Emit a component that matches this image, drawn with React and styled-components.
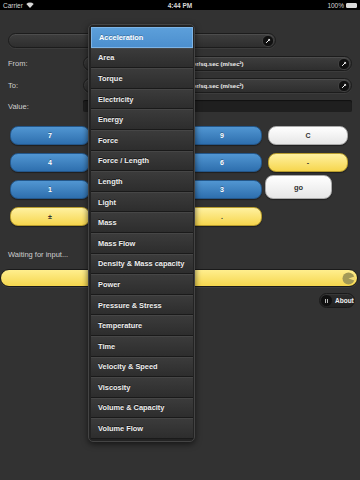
import React from 'react';
import styled, { createGlobalStyle, css } from 'styled-components';

const Global = createGlobalStyle`
  html, body {
    margin: 0;
    padding: 0;
    background: #333;
  }
  * { box-sizing: border-box; }
`;

const Screen = styled.div`
  position: relative;
  width: 360px;
  height: 480px;
  overflow: hidden;
  background: #323232;
  font-family: 'Liberation Sans', Arial, sans-serif;
  color: #ddd;
`;

const StatusBar = styled.div`
  height: 10px;
  background: #000;
  display: grid;
  grid-template-columns: 1fr auto 1fr;
  align-items: center;
  padding: 0 3px;
  font-size: 6.5px;
  color: #d8d8d8;

  & > span:last-child {
    justify-self: end;
    display: flex;
    align-items: center;
    gap: 2px;
  }
  & > span:first-child {
    display: flex;
    align-items: center;
    gap: 3px;
  }
`;

const Clock = styled.span`
  font-weight: bold;
`;

const Battery = styled.span`
  width: 11px;
  height: 5px;
  border: 1px solid #d8d8d8;
  background: #d8d8d8;
  border-radius: 1px;
`;

const Main = styled.div`
  padding: 0 8px;
`;

const Select = styled.div`
  height: 15px;
  border-radius: 8px;
  background: linear-gradient(#3e3e3e, #2e2e2e);
  border: 1px solid #1c1c1c;
  box-shadow: inset 0 1px 0 rgba(255, 255, 255, 0.08), 0 1px 0 rgba(255, 255, 255, 0.05);
  display: flex;
  align-items: center;
  padding: 0 1px 0 10px;
  font-size: 6px;
  font-weight: bold;
  color: #eee;
  width: ${(p) => p.$width || 'auto'};
  flex: ${(p) => (p.$width ? 'none' : '1')};

  & > span {
    flex: 1;
    text-align: center;
    margin-right: 6px;
    white-space: nowrap;
  }
  & > svg {
    flex: none;
  }
`;

const TopSelect = styled(Select)`
  margin-top: 23px;
`;

const FieldRow = styled.div`
  display: flex;
  align-items: center;
  margin-top: ${(p) => p.$top}px;
`;

const Label = styled.div`
  width: 75px;
  font-size: 7.5px;
  color: #d0d0d0;
`;

const ValueBox = styled.div`
  flex: 1;
  height: 12px;
  border-radius: 2px;
  background: #1f1f1f;
  box-shadow: inset 0 1px 1px rgba(0, 0, 0, 0.5);
`;

const Knob = () => (
  <svg width="12" height="12" viewBox="0 0 12 12">
    <circle cx="6" cy="6" r="5.6" fill="#111" stroke="#555" strokeWidth="0.6" />
    <path d="M4.4 7.6 L7.4 4.6" stroke="#fff" strokeWidth="1" strokeLinecap="round" />
    <path d="M6 4.4 L7.6 4.4 L7.6 6" fill="none" stroke="#fff" strokeWidth="0.7" />
  </svg>
);

const Keypad = styled.div`
  display: grid;
  grid-template-columns: repeat(4, 80px);
  grid-auto-rows: 19px;
  column-gap: 6px;
  row-gap: 8px;
  margin: 14px 0 0 2px;
`;

const tones = {
  blue: css`
    background: linear-gradient(#5196d2, #2e6fae);
    border-color: #24578a;
    color: #fff;
    text-shadow: 0 -1px 0 rgba(0, 0, 0, 0.3);
  `,
  yellow: css`
    background: linear-gradient(#fff1a0, #f6d64e);
    border-color: #b89d2e;
    color: #333;
  `,
  white: css`
    background: linear-gradient(#ffffff, #e6e6e6);
    border-color: #aaa;
    color: #333;
  `,
};

const Key = styled.div`
  border-radius: 8px;
  border: 1px solid;
  display: flex;
  align-items: center;
  justify-content: center;
  font-size: 7px;
  font-weight: bold;
  box-shadow: 0 1px 1px rgba(0, 0, 0, 0.4);
  ${(p) => tones[p.$tone]}
`;

const GoKey = styled(Key)`
  width: 67px;
  margin: -5px 0 0 -3px;
  font-size: 7.5px;
`;

const Waiting = styled.div`
  margin-top: 24px;
  font-size: 7.5px;
  color: #cfcfcf;
`;

const ProgressBar = styled.div`
  margin: 10px 2px 0 0;
  height: 18px;
  border-radius: 9px;
  background: linear-gradient(#ffee8e, #f5d64e);
  border: 1px solid #1a1a1a;
  box-shadow: 0 1px 0 rgba(255, 255, 255, 0.06);
  display: flex;
  align-items: center;
  justify-content: flex-end;
  padding-right: 2px;
`;

const AboutRow = styled.div`
  display: flex;
  justify-content: flex-end;
  padding-right: 5px;
  margin-top: 6px;
`;

const AboutButton = styled.div`
  height: 15px;
  width: 36px;
  border-radius: 8px;
  background: linear-gradient(#2c2c2c, #222);
  border: 1px solid #1a1a1a;
  box-shadow: inset 0 1px 0 rgba(255, 255, 255, 0.06);
  display: flex;
  align-items: center;
  gap: 3px;
  padding-left: 1px;
  font-size: 6.5px;
  font-weight: bold;
  color: #f0f0f0;
`;

const AboutIcon = styled.span`
  width: 11px;
  height: 11px;
  border-radius: 50%;
  background: #111;
  display: flex;
  align-items: center;
  justify-content: center;
  gap: 1px;

  &::before, &::after {
    content: '';
    width: 1px;
    height: 4px;
    background: #bbb;
  }
`;

const Menu = styled.div`
  position: absolute;
  left: 88px;
  top: 24px;
  width: 107px;
  padding: 2px 1px 2px 2px;
  background: #232323;
  border: 1px solid #444;
  border-radius: 5px;
  box-shadow: 0 2px 6px rgba(0, 0, 0, 0.6);
`;

const MenuItem = styled.div`
  height: 20.6px;
  display: flex;
  align-items: center;
  padding-left: 7px;
  font-size: 7.4px;
  font-weight: bold;
  color: #eee;
  text-shadow: 0 -1px 0 rgba(0, 0, 0, 0.6);
  border-bottom: 1px solid #1a1a1a;
  border-top: 1px solid #464646;
  background: linear-gradient(#3b3b3b, #2d2d2d);

  ${(p) =>
    p.$active &&
    css`
      background: linear-gradient(#5c9fda, #4c8fce);
      border: 1px solid #7db4e6;
      color: #fff;
      text-shadow: 0 -1px 0 rgba(0, 0, 0, 0.25);
    `}
`;

const categories = [
  'Acceleration', 'Area', 'Torque', 'Electricity', 'Energy', 'Force',
  'Force / Length', 'Length', 'Light', 'Mass', 'Mass Flow',
  'Density & Mass capacity', 'Power', 'Pressure & Stress', 'Temperature',
  'Time', 'Velocity & Speed', 'Viscosity', 'Volume & Capacity', 'Volume Flow',
];

// keys in the second column sit under the open menu, so their labels are not shown
const keys = [
  ['7', 'blue'], ['', 'blue'], ['9', 'blue'], ['C', 'white'],
  ['4', 'blue'], ['', 'blue'], ['6', 'blue'], ['-', 'yellow'],
  ['1', 'blue'], ['', 'blue'], ['3', 'blue'], ['go', 'white'],
  ['±', 'yellow'], ['', 'blue'], ['.', 'yellow'],
];

const App = () => {
  return (
    <Screen>
      <Global />
      <StatusBar>
        <span>
          Carrier
          <svg width="8" height="6" viewBox="0 0 8 6">
            <path d="M4 6 L0.3 2 A5.5 5.5 0 0 1 7.7 2 Z" fill="#d8d8d8" />
          </svg>
        </span>
        <Clock>4:44 PM</Clock>
        <span>
          100%
          <Battery />
        </span>
      </StatusBar>
      <Main>
        <TopSelect $width="268px">
          <span />
          <Knob />
        </TopSelect>
        <FieldRow $top={8}>
          <Label>From:</Label>
          <Select>
            <span>Meter/sq.sec (m/sec²)</span>
            <Knob />
          </Select>
        </FieldRow>
        <FieldRow $top={7}>
          <Label>To:</Label>
          <Select>
            <span>Meter/sq.sec (m/sec²)</span>
            <Knob />
          </Select>
        </FieldRow>
        <FieldRow $top={7}>
          <Label>Value:</Label>
          <ValueBox />
        </FieldRow>
        <Keypad>
          {keys.map(([label, tone], i) =>
            label === 'go' ? (
              <GoKey key={i} $tone={tone}>{label}</GoKey>
            ) : (
              <Key key={i} $tone={tone}>{label}</Key>
            )
          )}
        </Keypad>
        <Waiting>Waiting for input...</Waiting>
      </Main>
      <ProgressBar>
        <svg width="13" height="13" viewBox="0 0 13 13">
          <circle cx="6.5" cy="6.5" r="6" fill="#a39a57" />
          <path d="M6.5 6.5 L12.5 4.5 A6 6 0 0 1 12.5 8.5 Z" fill="#f4dd78" />
        </svg>
      </ProgressBar>
      <AboutRow>
        <AboutButton>
          <AboutIcon />
          About
        </AboutButton>
      </AboutRow>
      <Menu>
        {categories.map((c, i) => (
          <MenuItem key={c} $active={i === 0}>{c}</MenuItem>
        ))}
      </Menu>
    </Screen>
  );
};

export default App;
